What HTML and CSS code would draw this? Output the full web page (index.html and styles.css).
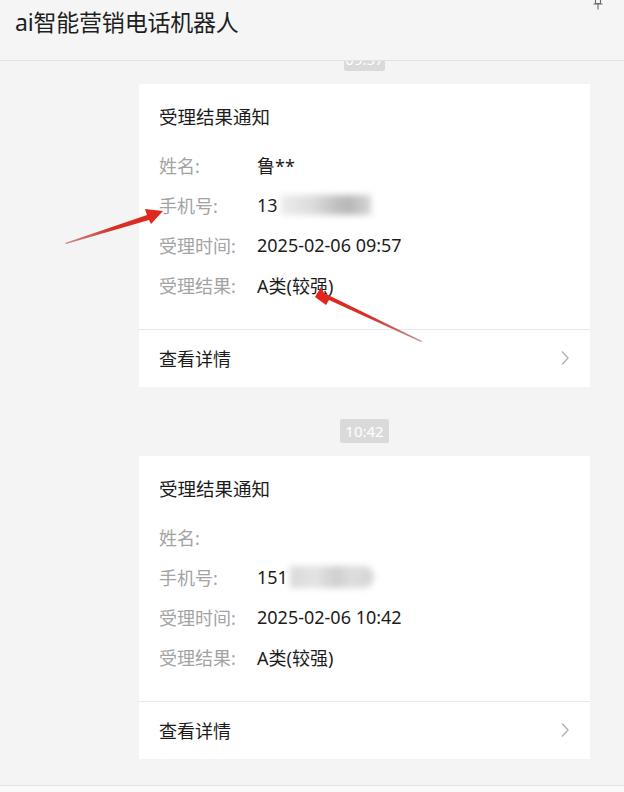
FILE: index.html
```html
<!DOCTYPE html>
<html lang="zh-CN">
<head>
<meta charset="utf-8">
<link rel="stylesheet" href="styles.css">
</head>
<body>
<div class="app">
  <header class="topbar">
    <h1 class="title">ai智能营销电话机器人</h1>
    <svg class="pin" width="12" height="10" viewBox="0 0 12 10">
      <path d="M3.5 0 V3.5 H8.5 V0 M1.5 4 H10.5 M6 4 V9.5" stroke="#6a6a6a" stroke-width="1.1" fill="none"/>
    </svg>
  </header>
  <main class="chat">
    <div class="time time-first">09:57</div>
    <section class="card">
      <div class="card-body">
        <div class="card-title">受理结果通知</div>
        <div class="row"><span class="label">姓名:</span><span class="value">鲁**</span></div>
        <div class="row"><span class="label">手机号:</span><span class="value">13<span class="blur blur-a"></span></span></div>
        <div class="row"><span class="label">受理时间:</span><span class="value">2025-02-06 09:57</span></div>
        <div class="row"><span class="label">受理结果:</span><span class="value">A类(较强)</span></div>
      </div>
      <div class="card-foot">
        <span>查看详情</span>
        <svg class="chev" width="10" height="16" viewBox="0 0 10 16"><path d="M2 1.5 L8 8 L2 14.5" stroke="#b4b4b4" stroke-width="1.4" fill="none"/></svg>
      </div>
    </section>
    <div class="time">10:42</div>
    <section class="card">
      <div class="card-body">
        <div class="card-title">受理结果通知</div>
        <div class="row"><span class="label">姓名:</span><span class="value"></span></div>
        <div class="row"><span class="label">手机号:</span><span class="value">151<span class="blur blur-b"></span></span></div>
        <div class="row"><span class="label">受理时间:</span><span class="value">2025-02-06 10:42</span></div>
        <div class="row"><span class="label">受理结果:</span><span class="value">A类(较强)</span></div>
      </div>
      <div class="card-foot">
        <span>查看详情</span>
        <svg class="chev" width="10" height="16" viewBox="0 0 10 16"><path d="M2 1.5 L8 8 L2 14.5" stroke="#b4b4b4" stroke-width="1.4" fill="none"/></svg>
      </div>
    </section>
  </main>
  <div class="inputbar"></div>
  <svg class="arrows" width="624" height="792" viewBox="0 0 624 792">
    <defs>
      <linearGradient id="g1" x1="65" y1="243" x2="163" y2="212" gradientUnits="userSpaceOnUse">
        <stop offset="0" stop-color="#b8433a" stop-opacity="0.6"/>
        <stop offset="0.5" stop-color="#d63026"/>
        <stop offset="1" stop-color="#e3261c"/>
      </linearGradient>
      <linearGradient id="g2" x1="421" y1="342" x2="315" y2="298" gradientUnits="userSpaceOnUse">
        <stop offset="0" stop-color="#9a4a44" stop-opacity="0.6"/>
        <stop offset="0.5" stop-color="#d63026"/>
        <stop offset="1" stop-color="#e3261c"/>
      </linearGradient>
    </defs>
    <polygon fill="url(#g1)" points="65,243 147,215 145,209 163,211 151,224 149,220 66,244"/>
    <polygon fill="url(#g2)" points="421,342 329,300 326,305 315,297 321,287 324,293 422,341"/>
  </svg>
</div>
</body>
</html>
```
FILE: styles.css
```css
* { box-sizing: border-box; }
html, body { margin: 0; padding: 0; }
body {
  width: 624px;
  height: 792px;
  overflow: hidden;
  background: #f4f4f4;
  font-family: "Noto Sans", "Noto Sans CJK SC", sans-serif;
  color: #1c1c1c;
}
.app {
  position: relative;
  display: flex;
  flex-direction: column;
  height: 792px;
}
.topbar {
  height: 61px;
  flex: none;
  display: flex;
  align-items: flex-start;
  padding-left: 15px;
  background: #f5f5f5;
  border-bottom: 1px solid #e2e2e2;
  position: relative;
  z-index: 2;
}
.title {
  flex: 1;
  margin: 0;
  font-weight: 400;
  font-size: 23px;
  line-height: 44px;
  color: #1e1e1e;
  letter-spacing: -0.2px;
}
.pin {
  margin-right: 20px;
  flex: none;
}
.chat {
  flex: 1;
  overflow: hidden;
  display: flex;
  flex-direction: column;
  align-items: center;
  padding-left: 139px;
  padding-right: 34px;
}
.time {
  width: 49px;
  height: 24px;
  line-height: 24px;
  text-align: center;
  font-size: 15px;
  color: #ffffff;
  background: #dadada;
  border-radius: 2px;
  margin-top: 32px;
  margin-bottom: 13px;
  flex: none;
}
.time-first {
  width: 41px;
  margin-top: -14px;
}
.card {
  width: 451px;
  background: #ffffff;
  flex: none;
}
.card-body {
  padding: 13px 20px 24px;
  border-bottom: 1px solid #e9e9e9;
}
.card-title {
  font-size: 18.5px;
  line-height: 40px;
  margin-bottom: 8px;
  color: #1c1c1c;
}
.row {
  display: grid;
  grid-template-columns: 98px 1fr;
  height: 40px;
  align-items: center;
  font-size: 18px;
}
.label { color: #a3a3a3; }
.value { color: #1c1c1c; display: flex; align-items: center; }
.blur {
  display: inline-block;
  height: 20px;
  filter: blur(3px);
}
.blur-a {
  width: 90px;
  margin-left: 3px;
  background: linear-gradient(90deg, #ececec 0%, #dcdcdc 35%, #c2c2c2 60%, #b7b7b7 75%, #d6d6d6 100%);
}
.blur-b {
  width: 84px;
  margin-left: 2px;
  height: 22px;
  border-radius: 0 11px 11px 0;
  background: linear-gradient(90deg, #d9d9d9 0%, #e4e4e4 30%, #cfcfcf 55%, #dedede 75%, #d4d4d4 100%);
}
.card-foot {
  height: 57px;
  display: flex;
  align-items: center;
  justify-content: space-between;
  padding: 0 20px 2px 20px;
  font-size: 18px;
  color: #1c1c1c;
}
.inputbar {
  height: 7px;
  flex: none;
  background: #fafafa;
  border-top: 1px solid #e3e3e3;
}
.arrows {
  position: absolute;
  left: 0;
  top: 0;
  pointer-events: none;
  z-index: 3;
}
```
